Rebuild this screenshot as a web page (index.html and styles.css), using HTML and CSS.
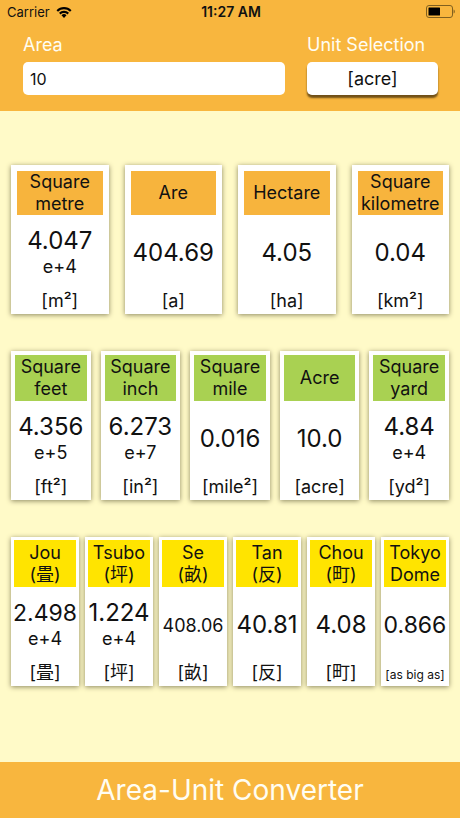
FILE: index.html
```html
<!DOCTYPE html>
<html lang="en">
<head>
<meta charset="utf-8">
<meta name="viewport" content="width=device-width, initial-scale=1">
<title>Area-Unit Converter</title>
<link rel="stylesheet" href="styles.css">
</head>
<body>
<header class="top">
  <div class="status">
    <div class="carrier"><span>Carrier</span>
      <svg class="wifi" viewBox="0 0 16 12" aria-hidden="true"><path d="M0.5 4.2a10.6 10.6 0 0 1 15 0l-1.5 1.6a8.5 8.5 0 0 0-12 0z"/><path d="M3 6.8a7.1 7.1 0 0 1 10 0l-1.5 1.6a5 5 0 0 0-7 0z"/><path d="M5.5 9.3a3.6 3.6 0 0 1 5 0L8 11.9z"/></svg>
    </div>
    <span class="time">11:27 AM</span>
    <svg class="battery" viewBox="0 0 30 14" aria-hidden="true"><rect class="shell" x="1.5" y="0.5" width="26" height="12" rx="2.5"/><rect x="3.5" y="2.5" width="11.5" height="8" rx="0.5"/><path class="cap" d="M28.6 4.6v4c1.6-.6 1.6-3.4 0-4z"/></svg>
  </div>
  <form class="controls">
    <div class="field area">
      <label for="area">Area</label>
      <input id="area" type="text" inputmode="decimal" value="10">
    </div>
    <div class="field unit-field">
      <label for="unit">Unit Selection</label>
      <button id="unit" type="button">[acre]</button>
    </div>
  </form>
</header>
<main>
  <section class="row metric">
    <article class="card"><h2>Square metre</h2><p class="value">4.047<small>e+4</small></p><p class="unit">[m²]</p></article>
    <article class="card"><h2>Are</h2><p class="value">404.69</p><p class="unit">[a]</p></article>
    <article class="card"><h2>Hectare</h2><p class="value">4.05</p><p class="unit">[ha]</p></article>
    <article class="card"><h2>Square kilometre</h2><p class="value">0.04</p><p class="unit">[km²]</p></article>
  </section>
  <section class="row imperial">
    <article class="card"><h2>Square feet</h2><p class="value">4.356<small>e+5</small></p><p class="unit">[ft²]</p></article>
    <article class="card"><h2>Square inch</h2><p class="value">6.273<small>e+7</small></p><p class="unit">[in²]</p></article>
    <article class="card"><h2>Square mile</h2><p class="value">0.016</p><p class="unit">[mile²]</p></article>
    <article class="card"><h2>Acre</h2><p class="value">10.0</p><p class="unit">[acre]</p></article>
    <article class="card"><h2>Square yard</h2><p class="value">4.84<small>e+4</small></p><p class="unit">[yd²]</p></article>
  </section>
  <section class="row japanese">
    <article class="card"><h2>Jou<br><span lang="ja">(畳)</span></h2><p class="value fitted">2.498<small>e+4</small></p><p class="unit" lang="ja">[畳]</p></article>
    <article class="card"><h2>Tsubo<br><span lang="ja">(坪)</span></h2><p class="value">1.224<small>e+4</small></p><p class="unit" lang="ja">[坪]</p></article>
    <article class="card"><h2>Se<br><span lang="ja">(畝)</span></h2><p class="value compact">408.06</p><p class="unit" lang="ja">[畝]</p></article>
    <article class="card"><h2>Tan<br><span lang="ja">(反)</span></h2><p class="value">40.81</p><p class="unit" lang="ja">[反]</p></article>
    <article class="card"><h2>Chou<br><span lang="ja">(町)</span></h2><p class="value">4.08</p><p class="unit" lang="ja">[町]</p></article>
    <article class="card"><h2>Tokyo Dome</h2><p class="value fitted">0.866</p><p class="unit note">[as big as]</p></article>
  </section>
</main>
<footer><h1>Area-Unit Converter</h1></footer>
</body>
</html>
```
FILE: styles.css
```css
* { box-sizing: border-box; }

body {
  margin: 0;
  min-height: 100vh;
  display: flex;
  flex-direction: column;
  background: #fffac8;
  color: #111;
  font-family: Inter, "Noto Sans CJK JP", sans-serif;
}

h1, h2, p { margin: 0; font-weight: 400; }

.top, footer { background: #f8b63e; }

.top { padding-bottom: 16px; }

.status {
  display: grid;
  grid-template-columns: 1fr auto 1fr;
  align-items: center;
  height: 24px;
  padding: 0 5px 0 7px;
  font-size: 13px;
  line-height: 24px;
}

.carrier { display: flex; align-items: center; gap: 6px; }
.wifi { width: 16px; height: 12px; }
.time { font-size: 14px; font-weight: 600; }
.battery { width: 30px; height: 14px; justify-self: end; }
.shell { fill: none; stroke: #80601f; }
.cap { fill: #80601f; }

.controls {
  display: flex;
  gap: 22px;
  padding: 9px 22px 0 23px;
}

.field { display: flex; flex-direction: column; gap: 5px; }
.area { flex: 2; }
.unit-field { flex: 1; }

label {
  color: #fffdf2;
  font-size: 18px;
  line-height: 24px;
  white-space: nowrap;
}

input, button {
  width: 100%;
  height: 33px;
  border: 0;
  border-radius: 5px;
  background: #fff;
  color: #111;
  font-family: inherit;
}

input { padding: 0 7px; font-size: 16px; }

button {
  padding: 0;
  font-size: 18px;
  box-shadow: 0 3px 2px #705018;
}

main {
  flex: 1;
  display: flex;
  flex-direction: column;
  gap: 37px;
  padding: 54px 11px;
}

.row { display: flex; }
.metric { gap: 16px; --inset: 6px; --title: 44px; }
.imperial { gap: 10px; --inset: 4px; --title: 46px; }
.japanese { gap: 6px; --inset: 3px; --title: 47px; }

.card {
  flex: 1 1 0;
  min-width: 0;
  height: 149px;
  display: flex;
  flex-direction: column;
  padding-top: var(--inset);
  background: #fff;
  box-shadow: 0 1px 5px #8c8760;
  text-align: center;
}

h2 {
  display: flex;
  flex-direction: column;
  justify-content: center;
  height: var(--title);
  margin: 0 var(--inset);
  font-size: 18px;
  line-height: 22px;
}

.metric h2 { background: #f7b43d; }
.imperial h2 { background: #a9d152; }
.japanese h2 { background: #ffe400; }

.value {
  flex: 1;
  display: flex;
  flex-direction: column;
  justify-content: center;
  padding-top: 2px;
  font-size: 24px;
  line-height: 28px;
}

.value small { font-size: 18px; line-height: 24px; }
.fitted { font-size: 23px; }
.compact { padding-top: 4px; font-size: 18px; }

.unit {
  height: 26px;
  font-size: 18px;
  line-height: 26px;
  white-space: nowrap;
}

.note { font-size: 12px; line-height: 30px; }

footer {
  padding: 10px 16px;
  color: #fffdf2;
  text-align: center;
}

h1 { font-size: 28px; line-height: 36px; }
```
